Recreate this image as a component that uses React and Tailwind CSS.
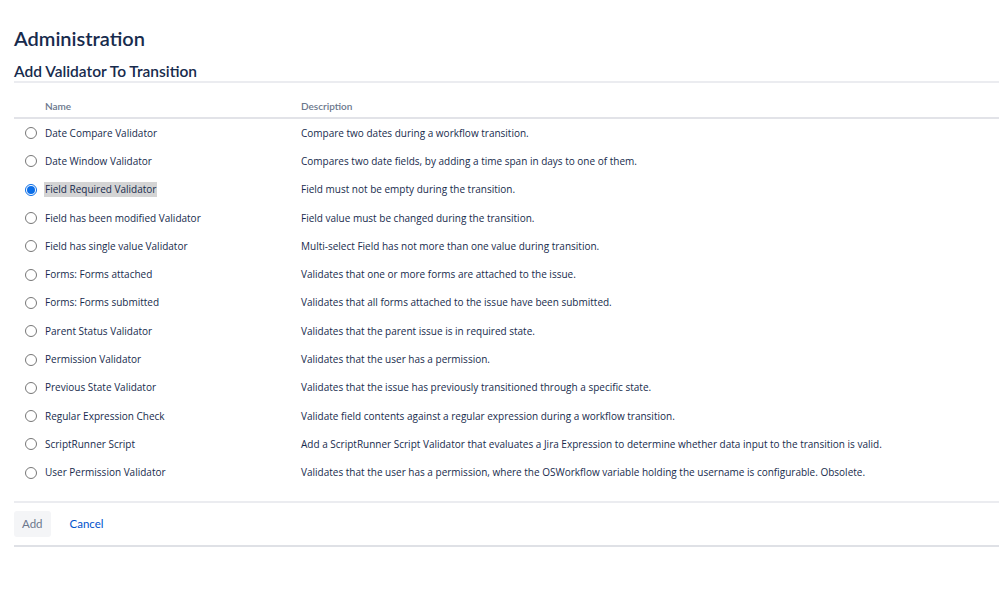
import React from "react";

const rows = [
  ["Date Compare Validator", "Compare two dates during a workflow transition."],
  ["Date Window Validator", "Compares two date fields, by adding a time span in days to one of them."],
  ["Field Required Validator", "Field must not be empty during the transition."],
  ["Field has been modified Validator", "Field value must be changed during the transition."],
  ["Field has single value Validator", "Multi-select Field has not more than one value during transition."],
  ["Forms: Forms attached", "Validates that one or more forms are attached to the issue."],
  ["Forms: Forms submitted", "Validates that all forms attached to the issue have been submitted."],
  ["Parent Status Validator", "Validates that the parent issue is in required state."],
  ["Permission Validator", "Validates that the user has a permission."],
  ["Previous State Validator", "Validates that the issue has previously transitioned through a specific state."],
  ["Regular Expression Check", "Validate field contents against a regular expression during a workflow transition."],
  ["ScriptRunner Script", "Add a ScriptRunner Script Validator that evaluates a Jira Expression to determine whether data input to the transition is valid."],
  ["User Permission Validator", "Validates that the user has a permission, where the OSWorkflow variable holding the username is configurable. Obsolete."],
];

function Radio({ checked }) {
  if (checked) {
    return (
      <span className="w-[12px] h-[12px] rounded-full border border-[#0b6ee8] bg-white flex items-center justify-center">
        <span className="w-[8px] h-[8px] rounded-full bg-[#0b6ee8]" />
      </span>
    );
  }
  return <span className="w-[12px] h-[12px] rounded-full border border-[#777777] bg-white" />;
}

export default function App() {
  return (
    <div className="bg-white w-[999px] h-[597px] text-[#172b4d]" style={{ fontFamily: 'Lato, "Open Sans", sans-serif' }}>
      <div className="pl-[14px] pt-[24px]">
        <h1 className="text-[20px] leading-[28px] font-semibold text-[#172b4d]">Administration</h1>
        <h2 className="mt-[9px] text-[15.5px] leading-[20px] font-semibold text-[#172b4d] border-b-2 border-[#ebecf0]">
          Add Validator To Transition
        </h2>
        <div className="mt-[15px] flex items-center h-[16px] border-b-2 border-[#e2e3e8] pb-[3px] box-content text-[10px] font-semibold text-[#6b778c]">
          <div className="w-[287px] pl-[31px]">Name</div>
          <div>Description</div>
        </div>
        <div className="pb-[14px]" style={{ fontFamily: '"Open Sans", sans-serif' }}>
          {rows.map(([name, desc], i) => (
            <div key={name} className="flex items-center h-[28.3px] text-[10px] text-[#172b4d]">
              <div className="w-[287px] flex items-center">
                <span className="w-[11px]" />
                <Radio checked={i === 2} />
                <span className="w-[8px]" />
                <span className={i === 2 ? "bg-[#d4d4d4] px-[1px] -mx-[1px] leading-[15px]" : ""}>{name}</span>
              </div>
              <div>{desc}</div>
            </div>
          ))}
        </div>
        <div className="border-t-2 border-[#ebecf0] pt-[8px] pb-[8px] flex items-center">
          <button className="h-[26px] px-[8px] rounded-[3px] bg-[#f4f5f7] text-[11.5px] text-[#6b778c]">Add</button>
          <span className="ml-[19px] text-[11.5px] text-[#0052cc]">Cancel</span>
        </div>
        <div className="border-t-2 border-[#dfe1e6]" />
      </div>
    </div>
  );
}
